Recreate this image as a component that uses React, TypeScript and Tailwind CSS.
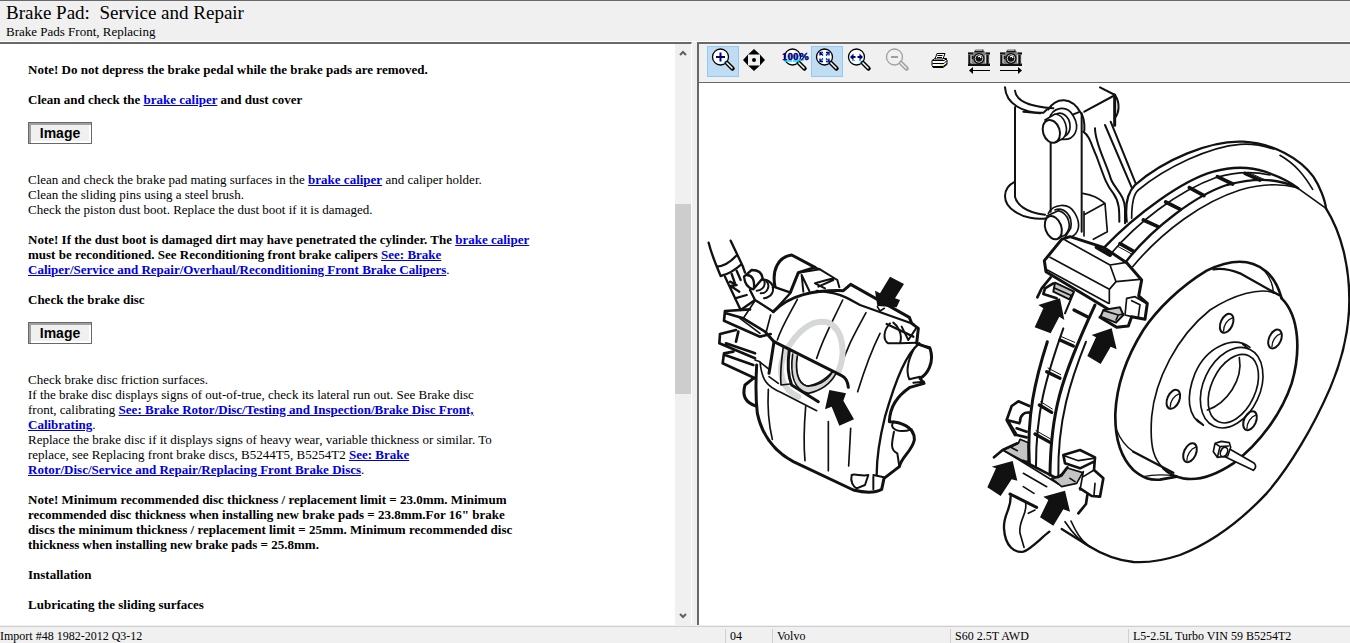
import React from 'react';
import clsx from 'clsx';

const Lens = ({ muted = false, children }: { muted?: boolean; children?: React.ReactNode }) => {
  const ink = muted ? '#a0a0a0' : '#000';
  return (
    <svg width="32" height="31" viewBox="0 0 32 31" fill="none" aria-hidden="true">
      <circle cx="13.5" cy="11" r="8" fill={muted ? '#f0f0f0' : '#fff'} stroke={ink} strokeWidth="1.3" />
      {!muted && <path d="M17 17l2-2" stroke="#00e5ff" strokeWidth="1.4" />}
      <path d="M20 17l5.500 5.500" stroke={ink} strokeWidth="4.500" strokeLinecap="round" />
      <path d="M19.500 16.500l6 6" stroke={muted ? '#f0f0f0' : '#fff'} strokeWidth="1.500" />
      {children}
    </svg>
  );
};

const Camera = ({ back = false }: { back?: boolean }) => (
  <svg width="32" height="31" viewBox="0 0 32 31" fill="none" aria-hidden="true">
    <path d="M5 6h6l2-3h7l2 3h5v14H5z" fill="#808080" />
    <path d="M5 7.500h5M23 7.500h4M11.500 5.500h9" stroke="#111" strokeWidth="1.500" />
    <path d="M5 19h22" stroke="#111" strokeWidth="2" />
    <path d="M6.500 9v9M9.500 10v3M24.500 9v9" stroke="#111" strokeWidth="2" />
    <path d="M13 4h6M8 9v8M22.500 9v8M26.500 9v8" stroke="#ddd" strokeWidth="1" />
    <circle cx="16" cy="12.500" r="5.500" fill="#111" />
    <circle cx="16" cy="12.500" r="3.800" stroke="#c8c8c8" strokeWidth="1" />
    <path d="M15 11l2-1 1 2" stroke="#fff" strokeWidth="1.200" />
    <path d={back ? 'M7 24.500h20' : 'M5 24.500h20'} stroke="#000" strokeWidth="1" />
    <path d={back ? 'M6 24.500l4-3.500v7z' : 'M27 24.500l-4-3.500v7z'} fill="#000" />
  </svg>
);

const tools = [
  {
    label: 'Zoom in', active: true, space: '',
    icon: <Lens><path d="M9 11h9M13.500 6.500v9" stroke="#000080" strokeWidth="2" /></Lens>,
  },
  {
    label: 'Pan', active: false, space: '',
    icon: (
      <svg width="32" height="31" viewBox="0 0 32 31" aria-hidden="true">
        <path d="M15 3l6 5.500H9zM15 25l6-5.500H9zM4 14l5-5.500v11zM26 14l-5-5.500v11z" />
        <circle cx="15" cy="14" r="2" />
      </svg>
    ),
  },
  {
    label: 'Actual size', active: false, space: 'ml-2',
    icon: (
      <Lens>
        <path d="M5 15h8M14 15h6M19 14h6M25 8v3" stroke="#00e5ff" strokeWidth="1.500" />
        <text x="3" y="14" fontFamily="Liberation Serif" fontSize="11" fontWeight="bold" fill="#000080" stroke="#000080" strokeWidth="0.5">100%</text>
      </Lens>
    ),
  },
  {
    label: 'Fit to window', active: true, space: '',
    icon: (
      <Lens>
        <path d="M9 9.500V6.500h3M15 6.500h3v3M18 12.500v3h-3M12 15.500H9v-3M9 6.500l3 3M18 6.500l-3 3M18 15.500l-3-3M9 15.500l3-3" stroke="#000080" strokeWidth="1.300" />
        <path d="M10.500 6.500l2 1.500M17 7.500v2M16 13.500l1 2M10 14h2" stroke="#00e5ff" strokeWidth="1" />
      </Lens>
    ),
  },
  {
    label: 'Fit to width', active: false, space: '',
    icon: (
      <Lens>
        <path d="M7 11l3.500-3.500v2.500h2v2h-2v2.500zM20 11l-3.500-3.500v2.500h-2v2h2v2.500z" fill="#000080" />
        <path d="M9 14.500h3M16 14.500h2" stroke="#00e5ff" />
      </Lens>
    ),
  },
  {
    label: 'Zoom out', active: false, space: 'ml-1.5',
    icon: <Lens muted><path d="M10 11h7" stroke="#a0a0a0" strokeWidth="2" /></Lens>,
  },
  {
    label: 'Print', active: false, space: 'ml-2.5',
    icon: (
      <svg width="32" height="31" viewBox="0 0 32 31" fill="none" stroke="#000" aria-hidden="true">
        <path d="M9 14.500l3-2h11l1 2v4l-4 3H10l-1-2z" fill="#fff" />
        <path d="M12 13l2-5.500h8L20 13z" fill="#fff" />
        <path d="M14.500 9.500h5M14 11.500h5M9.500 14.500H21l3-2M9.500 17.500H21l3-3M10 20.500h10l4-3" strokeWidth="1" />
        <path d="M17 19h3" stroke="#e6d800" />
      </svg>
    ),
  },
  { label: 'Previous image', active: false, space: 'ml-2', icon: <Camera back /> },
  { label: 'Next image', active: false, space: '', icon: <Camera /> },
];

const status = ['Import #48 1982-2012 Q3-12', '04', 'Volvo', 'S60 2.5T AWD', 'L5-2.5L Turbo VIN 59 B5254T2'];

const Ref = ({ children }: { children: React.ReactNode }) => (
  <a href="#" className="font-bold text-[#0000dd] underline">{children}</a>
);

const ImageButton = () => (
  <button
    type="button"
    className="mt-[15px] mb-7 block h-[22px] w-16 border border-[#696969] bg-[#f0f0f0] font-['Liberation_Sans',sans-serif] text-sm leading-none font-bold shadow-[inset_2px_2px_0_#a0a0a0,inset_-2px_-2px_0_#fff]"
  >
    Image
  </button>
);

const Disc = () => (
  <g transform="translate(1203 -9)">
    {/* splash shield */}
    <path d="M80 425C75 380 80 340 105 315C190 240 330 180 430 185C520 190 600 235 640 290C660 320 675 360 678 385" strokeWidth="7" />
    <path d="M95 415C95 370 100 342 115 330C200 260 330 200 420 193C460 190 490 197 520 207M540 226C590 255 615 290 638 328" />
    {/* friction face */}
    <path d="M678 385C725 460 748 560 748 660C748 760 722 850 690 925C640 1040 570 1160 500 1240C420 1325 330 1390 240 1425C180 1445 130 1448 100 1446C50 1440 10 1425 -30 1400L-115 1347" strokeWidth="7" />
    <path d="M-105 1325C-85 1355 -60 1385 -30 1400M-87 1323C-75 1350 -60 1378 -40 1392" />
    <path d="M10 505C110 400 250 300 340 275C400 258 450 260 495 275C540 290 570 305 595 325" strokeWidth="7" />
    <path d="M32 522C110 430 230 335 350 292C400 277 450 272 510 285" />
    <path d="M78 545C160 440 290 345 380 315C450 297 520 290 590 322" strokeWidth="7" />
    <path d="M98 560C190 450 310 365 420 330C490 310 550 312 590 322L678 385" />
    <path d="M60 491L101 514M130 420L174 440M197 366L241 388M268 323L312 347M352 290L398 312M435 280L480 300" strokeWidth="11" />
    <path d="M55 500L95 522M447 278L492 298" strokeWidth="3" />
    {/* hub */}
    <path d="M545 655C535 620 520 590 495 572C450 535 390 538 320 572C240 620 170 690 130 750C80 830 50 910 46 1000C44 1090 70 1140 100 1170C130 1195 150 1201 180 1199L230 1190" strokeWidth="8" />
    <path d="M545 655C600 710 602 820 575 910C545 1000 480 1090 400 1150C340 1190 290 1202 250 1195C225 1190 205 1180 190 1165" strokeWidth="8" />
    <path d="M190 1165C165 1140 148 1110 155 1010C165 900 230 770 330 690C400 645 480 620 525 640" />
    <path d="M340 568C370 563 400 572 420 580L538 646M100 1115L220 1178" strokeWidth="7" />
    <path d="M50 1050Q65 1090 100 1115M130 1190Q170 1180 230 1188M495 575C515 600 520 620 520 640" strokeWidth="4" />
    {[[380, 730], [525, 777], [220, 958], [450, 1022], [270, 1118]].map(([x, y]) => (
      <g key={x} transform={`translate(${x} ${y}) rotate(24)`}>
        <ellipse rx="18" ry="30" strokeWidth="6" />
        <path d="M9 -22C-3 -12 -6 10 1 25" strokeWidth="4" />
      </g>
    ))}
    <path d="M450 802C400 765 320 800 285 880C257 950 262 1010 310 1036M428 793L445 806M290 1018L310 1035" />
    <ellipse cx="395" cy="923" rx="85" ry="127" transform="rotate(25 395 923)" />
    <ellipse cx="400" cy="926" rx="66" ry="109" transform="rotate(25 400 926)" />
    <path d="M418 833C430 900 380 970 322 990" />
    <path d="M385 1105L463 1150Q472 1162 460 1171L370 1128" fill="#fff" />
    <path d="M345 1090L364 1084L388 1088L392 1102L383 1128L352 1132L340 1115zM345 1090L360 1100L385 1098M360 1100L352 1132" fill="#fff" />
    <ellipse cx="372" cy="1116" rx="10" ry="15" transform="rotate(25 372 1116)" />
  </g>
);

const Strut = () => (
  <g transform="translate(873 -9)">
    <path d="M45 22C48 72 100 100 160 98L175 85M75 32C78 62 110 80 190 85M75 82V350C80 372 105 398 165 404M75 305C35 325 35 370 75 395C100 412 140 420 170 415M182 185V395M275 100V455" strokeWidth="6" />
    <path d="M100 95L150 100M175 88C200 50 245 50 272 98C282 110 284 130 283 152M283 95L370 48M330 22L375 45C392 70 386 100 376 112M250 103L265 97" strokeWidth="6" />
    <path d="M374 45V136" strokeWidth="9" />
    <path d="M280 155C300 170 302 190 320 230C345 300 350 315 370 340C388 365 388 390 388 425M315 145C315 190 345 240 362 295C372 325 405 345 405 385V430M345 135L425 322M362 125L437 310" strokeWidth="6" />
    <path d="M278 340C310 345 325 355 345 370L352 455L310 478M285 403L345 370M282 395V468" strokeWidth="5" />
    <path d="M178 118C185 82 230 72 250 108C272 145 255 182 215 178M195 105C215 90 238 110 240 135C242 160 225 175 208 170" />
    <path d="M165 120L195 102C225 105 240 150 220 175L198 187" fill="#fff" />
    <ellipse cx="184" cy="154" rx="25" ry="35" fill="#fff" transform="rotate(-18 184 154)" strokeWidth="6" />
    <path d="M175 400C190 372 235 365 255 400C275 435 265 460 245 470M195 390C220 380 250 405 242 445L225 472" />
    <path d="M170 408L205 392C235 400 250 440 225 465L205 475" fill="#fff" />
    <ellipse cx="190" cy="443" rx="24" ry="36" fill="#fff" transform="rotate(-20 190 443)" strokeWidth="6" />
  </g>
);

const Carrier = () => (
  <>
    <g transform="translate(843 891)">
      <path d="M105 165L80 120L95 78L115 64L148 78M80 120L118 130M85 125L110 165L140 172M120 125C120 105 135 95 148 98M110 145L140 155" fill="#fff" strokeWidth="8" />
      <path d="M68 210L115 190L120 178L145 188L145 245L130 243zM215 295L245 288L262 264L308 278L290 310L245 320z" fill="#c4c4c4" />
      <path d="M202 -115C165 0 140 110 148 250L168 260L210 288L235 290C232 120 250 80 318 -115L320 -200L290 -230z" fill="#fff" stroke="none" />
      <path d="M202 -115C165 0 140 110 148 250M345 -225C240 0 212 100 210 285" strokeWidth="9" />
      <path d="M250 -155C195 0 168 100 168 258M318 -115C272 0 232 120 235 290M280 -260L255 -200" strokeWidth="6" />
      <path d="M178 75L215 97M165 162L210 187M240 -120L280 -102M200 -25L240 -5M282 -210L322 -190" strokeWidth="10" />
      <path d="M182 65L217 87M168 152L212 177M242 -131L284 -113M204 -36L242 -16" strokeWidth="3" />
      <path d="M42 232L68 210L112 190M130 243L225 292C245 292 250 276 262 262M250 225L300 210L345 232L342 270L370 295L360 350L335 348L300 325M250 225L255 250L300 265L342 245" strokeWidth="8" />
      <path d="M72 212L235 312M90 200L112 212M130 280L200 320M130 320L162 340M255 228L295 242L340 235M310 275L300 330M342 270L310 290M345 310L342 345M270 295L285 305M145 400L165 390" strokeWidth="5" />
      <path d="M90 342L170 382" strokeWidth="9" />
      <path d="M92 342C95 390 70 400 72 445C75 500 105 520 130 515C150 510 185 472 208 455" strokeWidth="7" />
      <path d="M137 370C142 405 115 420 120 460L132 502" />
      <path d="M322 345L318 372L295 400" strokeWidth="8" />
      <path d="M22 322L48 265L35 260L98 243L112 302L95 298L62 348zM180 412L205 360L190 350L255 332L270 395L250 388L220 437z" fill="#111" stroke="none" />
    </g>
    <g transform="translate(933 411)">
      <path d="M122 172L95 205L82 232M130 190L105 205L100 222L140 235" fill="#fff" strokeWidth="8" />
      <path d="M135 188L192 215L178 238L130 215z" fill="#c4c4c4" strokeWidth="6" />
      <path d="M135 205L182 226" />
      <path d="M155 58L180 50L280 82L350 128L395 180L386 228L412 250L405 298L365 290L355 318L320 322L270 292L295 268L108 155L103 122z" fill="#fff" strokeWidth="9" />
      <path d="M165 60L300 135L345 128M300 135L318 185L390 178M318 185L298 208L120 112M108 148L295 250M298 208V250M350 235L345 285M350 235L375 230L408 250M365 242L390 254L385 290M345 285L365 290" strokeWidth="5" />
      <path d="M280 270L330 262L340 285L318 308L272 290z" fill="#c4c4c4" strokeWidth="6" />
      <path d="M282 272L325 285L318 300M325 285L340 282" />
      <path d="M260 82L300 105" strokeWidth="12" />
      <path d="M74 322L100 265L85 255L150 235L163 300L148 290L122 340zM232 408L258 352L245 345L305 325L320 388L302 380L272 432z" fill="#111" stroke="none" />
    </g>
  </>
);

const Caliper = () => (
  <g transform="translate(3 441)">
    {/* brake hose */}
    <path d="M26 38C35 75 48 105 62 138M92 32L128 108L135 128M50 110Q80 108 108 78M62 138Q95 130 125 102" strokeWidth="7" />
    <path d="M75 140L122 240M95 132L105 160M110 122L122 150M90 155L110 165L92 168L118 185M105 205L140 195M122 240L165 210" strokeWidth="7" />
    {/* upper pin */}
    <path d="M225 170C215 120 235 80 275 75L345 112L295 128L272 185" strokeWidth="9" />
    <path d="M295 128L360 118L412 150L418 172M360 118L345 112M305 135L310 185M305 135L328 183M345 160L400 145M355 170L400 150M345 160L375 175" strokeWidth="6" />
    {/* bleed nipple */}
    <path d="M150 180C180 130 210 150 220 170L272 188L220 245L165 210z" fill="#fff" strokeWidth="7" />
    <path d="M132 140L155 120Q185 120 188 145L160 178Q135 172 132 140zM140 135Q165 135 162 175" fill="#fff" strokeWidth="7" />
    <path d="M170 182C190 180 198 165 192 150M182 190C205 190 210 165 200 155M192 205C215 200 222 185 218 172" strokeWidth="6" />
    {/* body */}
    <path d="M75 243L150 238M75 243L72 272L180 320L212 312M60 312L108 300M60 312L58 340L165 385M72 370L100 365M72 370L68 400L165 445M78 250L130 265L195 305M78 340L165 370M75 375L160 405M115 305L108 335" strokeWidth="8" />
    <path d="M160 445L135 465C125 500 140 520 168 528" strokeWidth="9" />
    <path d="M132 262L165 212M198 308L212 255M120 265L180 310" />
    <path d="M220 245C270 195 340 180 430 182L452 163L628 262L635 280L655 295L650 340L690 355C705 400 680 435 660 445L672 460L630 472C590 500 570 530 568 575C600 575 645 590 643 630C635 665 605 680 598 710L552 745L545 778C520 792 480 785 460 780L280 695C215 660 185 610 172 550C165 490 168 440 170 405" strokeWidth="9" />
    <path d="M350 183C420 185 450 210 480 225L640 282M560 282L640 320M658 340C620 370 590 440 555 560C540 620 530 680 530 735" strokeWidth="7" />
    <path d="M292 208C270 250 245 290 232 330M428 210C400 270 370 320 350 385M498 248C470 300 440 350 420 420M540 310C510 370 490 430 473 485M205 478C202 530 208 590 217 628M317 530C312 590 310 640 315 692M385 575V722M452 595L446 708" strokeWidth="5" />
    <path d="M570 280C550 300 548 330 565 340H600C610 310 590 285 580 278M605 290L625 330L650 292M600 340L650 338M660 345L690 352M640 360C620 400 620 430 628 448L660 440M672 455L640 458M580 575C565 600 600 610 635 598M582 605C575 640 570 660 592 670L598 710M455 735C450 755 460 770 470 775L495 765L505 735C485 740 465 730 455 735M520 735L552 742M520 740V778" strokeWidth="6" />
    {/* seal marking and piston window */}
    <path d="M295 500C245 480 230 420 255 370C290 300 340 265 385 278C435 300 435 380 415 425" stroke="#d6d7d8" strokeWidth="18" />
    <path d="M198 308L222 335L425 437Q442 445 445 472" strokeWidth="9" />
    <path d="M222 335C215 380 212 400 207 430M268 360C262 400 265 440 275 465L355 515" strokeWidth="9" />
    <path d="M250 350C243 400 240 430 243 465M207 440L235 460M243 465L270 462M165 390L180 395C185 450 200 470 245 488L350 542M178 395L210 420" strokeWidth="5" />
    <path d="M290 380C285 430 295 460 320 468C355 465 385 440 398 425" />
    <path d="M278 372C270 430 280 480 325 490C370 480 395 455 408 430L398 425C380 455 350 470 320 468C292 460 285 420 292 378" fill="#d6d7d8" />
    <path d="M570 140L612 162L585 205L600 210L590 232L532 228L525 182L540 190zM388 480L438 490L430 512L462 568L418 587L395 530L375 538z" fill="#111" stroke="none" />
    <path d="M532 230L540 243L553 235" strokeWidth="5" />
  </g>
);

const BrakeDrawing = () => (
  <svg
    viewBox="0 0 1953 1626"
    className="block w-full"
    fill="none"
    stroke="#111"
    strokeWidth="5"
    strokeLinejoin="round"
    strokeLinecap="round"
    role="img"
    aria-label="Brake caliper and brake disc"
  >
    <Disc />
    <Strut />
    <Carrier />
    <Caliper />
  </svg>
);

export default function App() {
  return (
    <div className="flex h-screen flex-col overflow-hidden bg-[#f0f0f0] font-['Liberation_Serif',serif] text-[13px] leading-[15px] text-black">
      <header className="border-t border-[#696969] px-1.5 pb-0.5">
        <h1 className="text-[19px] leading-[23px] whitespace-pre">Brake Pad:  Service and Repair</h1>
        <h2 className="leading-[15px]">Brake Pads Front, Replacing</h2>
      </header>

      <main className="grid min-h-0 flex-1 grid-cols-[692fr_653fr] gap-[5px] border-t border-white">
        <div className="flex min-h-0 overflow-hidden border-t-2 border-r border-t-[#696969] border-r-white bg-white">
          <article className="flex-1 overflow-hidden pt-[18px] pl-7 whitespace-nowrap">
            <p className="mb-[15px] font-bold">Note! Do not depress the brake pedal while the brake pads are removed.</p>
            <p className="font-bold">Clean and check the <Ref>brake caliper</Ref> and dust cover</p>
            <ImageButton />
            <p className="mb-[15px]">
              Clean and check the brake pad mating surfaces in the <Ref>brake caliper</Ref> and caliper holder.<br />
              Clean the sliding pins using a steel brush.<br />
              Check the piston dust boot. Replace the dust boot if it is damaged.
            </p>
            <p className="mb-[15px] font-bold">
              Note! If the dust boot is damaged dirt may have penetrated the cylinder. The <Ref>brake caliper</Ref><br />
              must be reconditioned. See Reconditioning front brake calipers <Ref>See: Brake<br />
              Caliper/Service and Repair/Overhaul/Reconditioning Front Brake Calipers</Ref><span className="font-normal">.</span>
            </p>
            <p className="font-bold">Check the brake disc</p>
            <ImageButton />
            <p className="mb-[15px]">
              Check brake disc friction surfaces.<br />
              If the brake disc displays signs of out-of-true, check its lateral run out. See Brake disc<br />
              front, calibrating <Ref>See: Brake Rotor/Disc/Testing and Inspection/Brake Disc Front,<br />
              Calibrating</Ref>.<br />
              Replace the brake disc if it displays signs of heavy wear, variable thickness or similar. To<br />
              replace, see Replacing front brake discs, B5244T5, B5254T2 <Ref>See: Brake<br />
              Rotor/Disc/Service and Repair/Replacing Front Brake Discs</Ref>.
            </p>
            <p className="mb-[15px] font-bold">
              Note! Minimum recommended disc thickness / replacement limit = 23.0mm. Minimum<br />
              recommended disc thickness when installing new brake pads = 23.8mm.For 16" brake<br />
              discs the minimum thickness / replacement limit = 25mm. Minimum recommended disc<br />
              thickness when installing new brake pads = 25.8mm.
            </p>
            <p className="mb-[15px] font-bold">Installation</p>
            <p className="font-bold">Lubricating the sliding surfaces</p>
          </article>
          <div className="flex w-4 flex-col items-center bg-[#f0f0f0]" aria-hidden="true">
            <svg className="my-1.5" width="8" height="6" fill="none" stroke="#606060" strokeWidth="2"><path d="M1 5l3-3 3 3" /></svg>
            <div className="w-full flex-1">
              <div className="h-[26%]" />
              <div className="h-[35%] w-full bg-[#cdcdcd]" />
            </div>
            <svg className="my-1.5" width="8" height="6" fill="none" stroke="#606060" strokeWidth="2"><path d="M1 1l3 3 3-3" /></svg>
          </div>
        </div>

        <section className="flex min-h-0 min-w-0 flex-col border-t-2 border-l-2 border-[#696969] bg-white">
          <div role="toolbar" aria-label="Image tools" className="flex h-[39px] shrink-0 border-b border-[#696969] bg-[#f0f0f0] pt-0.5 pl-2">
            {tools.map((tool) => (
              <button
                key={tool.label}
                type="button"
                aria-label={tool.label}
                disabled={tool.label === 'Zoom out'}
                className={clsx('h-[31px] w-8 shrink-0', tool.space, tool.active && 'bg-[#c0dcf3] outline outline-1 -outline-offset-1 outline-[#90c8f6]')}
              >
                {tool.icon}
              </button>
            ))}
          </div>
          <div className="min-h-0 flex-1 overflow-hidden">
            <BrakeDrawing />
          </div>
        </section>
      </main>

      <footer className="mt-px grid h-[17px] shrink-0 grid-cols-[725fr_47fr_178fr_178fr_222fr] overflow-hidden border-t border-[#d0d0d0] pt-0.5 text-xs leading-[15px] whitespace-nowrap">
        {status.map((text, i) => (
          <span key={text} className={clsx(i > 0 && 'border-l border-[#d0d0d0] pl-1')}>{text}</span>
        ))}
      </footer>
    </div>
  );
}
